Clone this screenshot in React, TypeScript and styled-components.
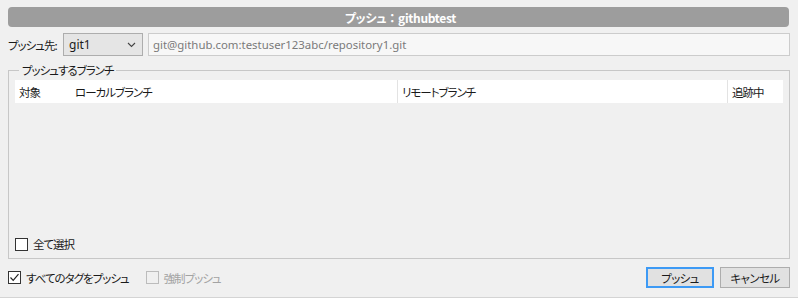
import React from 'react';
import styled, { createGlobalStyle } from 'styled-components';

const GlobalStyle = createGlobalStyle`
  html, body {
    margin: 0;
    padding: 0;
    background: #f0f0f0;
  }
  body {
    font-family: "Noto Sans CJK JP", "Noto Sans", sans-serif;
    font-size: 11.5px;
    letter-spacing: -1px;
    font-feature-settings: "palt";
    color: #1a1a1a;
  }
`;

const Dialog = styled.div`
  width: 798px;
  height: 298px;
  box-sizing: border-box;
  padding: 7px 8px 0 8px;
  display: flex;
  flex-direction: column;
  border-bottom: 1px solid #d4d4d4;
`;

const TitleBar = styled.div`
  height: 20px;
  margin-right: 1px;
  border-radius: 4px;
  background: #9d9d9d;
  color: #ffffff;
  font-weight: bold;
  font-size: 12px;
  letter-spacing: -0.3px;
  display: flex;
  align-items: center;
  justify-content: center;
  padding-left: 4px;
`;

const TitleColon = styled.span`
  font-feature-settings: normal;
`;

const TargetRow = styled.div`
  display: flex;
  align-items: center;
  height: 23px;
  margin-top: 6px;
  gap: 5px;
`;

const Label = styled.span`
  width: 50px;
  white-space: nowrap;
`;

const Select = styled.div`
  width: 80px;
  height: 23px;
  box-sizing: border-box;
  border: 1px solid #adadad;
  background: #e5e5e5;
  display: flex;
  align-items: center;
  justify-content: space-between;
  padding: 0 6px 0 5px;
  font-family: "Noto Sans", sans-serif;
  font-size: 12px;
  letter-spacing: 0;
`;

const UrlInput = styled.div`
  flex: 1;
  height: 23px;
  box-sizing: border-box;
  border: 1px solid #cccccc;
  background: #f7f7f7;
  color: #7a7a7a;
  display: flex;
  align-items: center;
  padding-left: 4px;
  font-family: "Noto Sans", sans-serif;
  font-size: 11.4px;
  letter-spacing: 0;
`;

const Group = styled.fieldset`
  margin: 6px 0 0 0;
  padding: 2px 6px 7px 6px;
  border: 1px solid #c7c7c7;
  min-width: 0;
`;

const Legend = styled.legend`
  margin-left: 4px;
  padding: 0 3px;
  line-height: 16px;
`;

const GroupBody = styled.div`
  height: 171px;
  display: flex;
  flex-direction: column;
`;

const HeaderRow = styled.div`
  height: 23px;
  background: #ffffff;
  display: grid;
  grid-template-columns: 56px 326px 330px 1fr;
`;

const HeaderCell = styled.div<{ $sep?: boolean }>`
  display: flex;
  align-items: center;
  padding-left: 4px;
  border-left: ${(p) => (p.$sep ? '1px solid #e3e3e3' : 'none')};
  white-space: nowrap;
`;

const RowsArea = styled.div`
  flex: 1;
`;

const CheckRow = styled.label<{ $disabled?: boolean }>`
  display: flex;
  align-items: center;
  gap: 5px;
  color: ${(p) => (p.$disabled ? '#a3a3a3' : '#1a1a1a')};
`;

const Box = styled.span<{ $disabled?: boolean }>`
  width: 13px;
  height: 13px;
  box-sizing: border-box;
  border: 1px solid ${(p) => (p.$disabled ? '#bcbcbc' : '#333333')};
  background: ${(p) => (p.$disabled ? '#f0f0f0' : '#ffffff')};
  display: flex;
  align-items: center;
  justify-content: center;
`;

const SelectAll = styled.div`
  height: 14px;
  display: flex;
  align-items: center;
`;

const Footer = styled.div`
  display: flex;
  align-items: center;
  height: 21px;
  margin-top: 8px;
  gap: 17px;
`;

const Spacer = styled.div`
  flex: 1;
`;

const Buttons = styled.div`
  display: flex;
  gap: 6px;
`;

const Button = styled.button<{ $primary?: boolean }>`
  height: 21px;
  width: ${(p) => (p.$primary ? '68px' : '70px')};
  box-sizing: border-box;
  border: ${(p) => (p.$primary ? '2px solid #3d9af5' : '1px solid #adadad')};
  background: #e1e1e1;
  font-family: "Noto Sans CJK JP", sans-serif;
  font-feature-settings: "palt";
  font-size: 11.5px;
  letter-spacing: -0.6px;
  color: #1a1a1a;
  padding: 0;
  margin: 0;
`;

function Check({ checked, disabled }: { checked?: boolean; disabled?: boolean }) {
  return (
    <Box $disabled={disabled}>
      {checked && (
        <svg width="11" height="11" viewBox="0 0 11 11">
          <path d="M1.5 5.5 L4.2 8.3 L9.5 2.2" fill="none" stroke="#222" strokeWidth="1.2" />
        </svg>
      )}
    </Box>
  );
}

export default function App() {
  return (
    <>
      <GlobalStyle />
      <Dialog>
        <TitleBar>
          プッシュ<TitleColon>：</TitleColon>githubtest
        </TitleBar>
        <TargetRow>
          <Label>プッシュ先:</Label>
          <Select>
            <span>git1</span>
            <svg width="9" height="6" viewBox="0 0 9 6">
              <path d="M1 1 L4.5 4.5 L8 1" fill="none" stroke="#444" strokeWidth="1.1" />
            </svg>
          </Select>
          <UrlInput>git@github.com:testuser123abc/repository1.git</UrlInput>
        </TargetRow>
        <Group>
          <Legend>プッシュするブランチ</Legend>
          <GroupBody>
            <HeaderRow>
              <HeaderCell>対象</HeaderCell>
              <HeaderCell>ローカルブランチ</HeaderCell>
              <HeaderCell $sep>リモートブランチ</HeaderCell>
              <HeaderCell $sep>追跡中</HeaderCell>
            </HeaderRow>
            <RowsArea />
            <SelectAll>
              <CheckRow>
                <Check />
                全て選択
              </CheckRow>
            </SelectAll>
          </GroupBody>
        </Group>
        <Footer>
          <CheckRow>
            <Check checked />
            すべてのタグをプッシュ
          </CheckRow>
          <CheckRow $disabled>
            <Check disabled />
            強制プッシュ
          </CheckRow>
          <Spacer />
          <Buttons>
            <Button $primary>プッシュ</Button>
            <Button>キャンセル</Button>
          </Buttons>
        </Footer>
      </Dialog>
    </>
  );
}
